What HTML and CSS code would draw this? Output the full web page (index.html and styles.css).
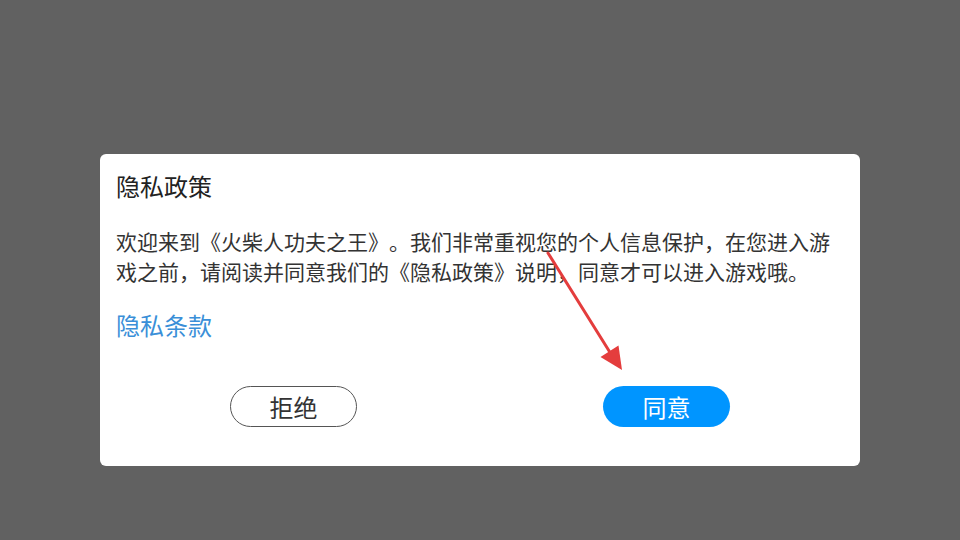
FILE: index.html
```html
<!DOCTYPE html>
<html lang="zh-CN">
<head>
<meta charset="utf-8">
<title>隐私政策</title>
<link rel="stylesheet" href="styles.css">
</head>
<body>
<div class="screen">
  <div class="dialog">
    <div class="title">隐私政策</div>
    <div class="content">欢迎来到《火柴人功夫之王》。我们非常重视您的个人信息保护，在您进入游戏之前，请阅读并同意我们的《隐私政策》说明，同意才可以进入游戏哦。</div>
    <div class="link">隐私条款</div>
    <div class="actions">
      <div class="btn btn-reject">拒绝</div>
      <div class="btn btn-agree">同意</div>
    </div>
  </div>
  <svg class="arrow" width="960" height="540" viewBox="0 0 960 540" xmlns="http://www.w3.org/2000/svg">
    <line x1="548" y1="253" x2="611" y2="354" stroke="#e43d3d" stroke-width="3" stroke-linecap="round"/>
    <polygon points="622,370 600.5,357 618.5,345.5" fill="#e43d3d"/>
  </svg>
</div>
</body>
</html>
```
FILE: styles.css
```css
html, body {
  margin: 0;
  padding: 0;
  width: 960px;
  height: 540px;
  overflow: hidden;
}
body {
  background: #616161;
  font-family: "Noto Sans CJK SC", "Noto Sans", sans-serif;
  text-spacing-trim: space-all;
  font-feature-settings: "halt" 0, "chws" 0;
}
.screen {
  position: relative;
  width: 960px;
  height: 540px;
  padding-top: 154px;
  box-sizing: border-box;
}
.dialog {
  width: 760px;
  margin: 0 auto;
  background: #ffffff;
  border-radius: 6px;
  padding: 16px 16px 39px 16px;
  box-sizing: border-box;
  display: flex;
  flex-direction: column;
}
.title {
  font-size: 24px;
  line-height: 32px;
  color: #222222;
}
.content {
  margin-top: 24px;
  font-size: 21px;
  line-height: 30px;
  color: #333333;
}
.link {
  margin-top: 23px;
  font-size: 24px;
  line-height: 32px;
  color: #3a8fd8;
}
.actions {
  margin-top: 45px;
  display: flex;
  justify-content: space-between;
  padding: 0 114px;
}
.btn {
  width: 127px;
  height: 41px;
  box-sizing: border-box;
  border-radius: 21px;
  display: flex;
  align-items: center;
  justify-content: center;
  font-size: 24px;
}
.btn-reject {
  border: 1px solid #555555;
  color: #333333;
}
.btn-agree {
  background: #0095ff;
  color: #ffffff;
}
.arrow {
  position: absolute;
  left: 0;
  top: 0;
  pointer-events: none;
}
```
